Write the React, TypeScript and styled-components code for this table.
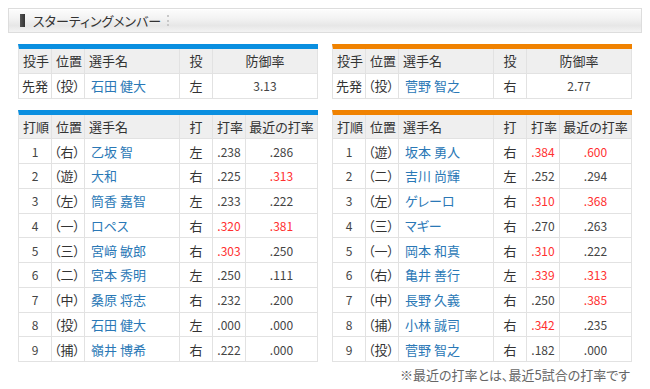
import React from "react";
import styled, { createGlobalStyle } from "styled-components";

const GlobalStyle = createGlobalStyle`
  html, body { margin: 0; padding: 0; background: #fff; }
  body {
    font-family: "Noto Sans CJK JP", "Noto Sans", sans-serif;
    font-feature-settings: "palt";
    color: #333;
  }
`;

const Page = styled.div`
  padding: 8px;
`;

const TitleBar = styled.div`
  box-sizing: border-box;
  height: 25px;
  display: flex;
  align-items: center;
  gap: 8px;
  padding-left: 11px;
  border: 1px solid #dddddd;
  background: linear-gradient(to bottom, #fdfdfd 0%, #f3f3f3 40%, #e7e7e7 72%, #f3f3f3 100%);
  box-shadow: inset 0 1px 0 #ffffff;
`;

const TitleMark = styled.span`
  width: 5px;
  height: 13px;
  background: linear-gradient(to right, #555, #333);
`;

const TitleText = styled.h2`
  margin: 0;
  font-size: 13px;
  font-weight: normal;
  line-height: 1;
  color: #333;
`;

const TitleDots = styled.span`
  margin-left: -2px;
  height: 11px;
  border-left: 2px dotted #c8c8c8;
`;

const Columns = styled.div`
  margin-top: 11px;
  padding: 0 10px;
  display: grid;
  grid-template-columns: 300px 300px;
  column-gap: 14px;
`;

const TeamColumn = styled.section`
  display: flex;
  flex-direction: column;
  gap: 11px;
`;

const StatTable = styled.table<{ $accent: string }>`
  width: 300px;
  table-layout: fixed;
  border-collapse: separate;
  border-spacing: 0;
  border-top: 5px solid ${(p) => p.$accent};
  border-left: 1px solid #e2e2e2;
`;

const HeadCell = styled.th<{ $align?: string }>`
  box-sizing: border-box;
  height: 24.75px;
  padding: 0 0 0 4px;
  font-size: 13px;
  font-weight: normal;
  color: #333;
  text-align: ${(p) => p.$align || "left"};
  background: #efefef;
  border-right: 1px solid #e2e2e2;
  border-bottom: 1px solid #e2e2e2;
  white-space: nowrap;
  overflow: hidden;
  ${(p) => (p.$align === "center" ? "padding: 0;" : "")}
`;

const Cell = styled.td<{ $align?: string; $pad?: number }>`
  box-sizing: border-box;
  height: 24.75px;
  padding: 0 0 0 ${(p) => (p.$pad ?? 4)}px;
  font-size: 13px;
  color: #333;
  text-align: ${(p) => p.$align || "left"};
  background: #fff;
  border-right: 1px solid #e2e2e2;
  border-bottom: 1px solid #e2e2e2;
  white-space: nowrap;
  overflow: hidden;
  ${(p) => (p.$align === "center" ? "padding: 0;" : "")}
`;

const NameLink = styled.a`
  color: #2a78b6;
  text-decoration: none;
`;

const Rate = styled.span<{ $hot?: boolean }>`
  font-size: 12px;
  color: ${(p) => (p.$hot ? "#ff3030" : "#444")};
`;

const Note = styled.p`
  margin: 5px 0 0;
  padding-right: 12px;
  text-align: right;
  font-size: 13px;
  line-height: 16px;
  color: #666;
`;

type Pitcher = { pos: string; name: string; hand: string; era: string };
type Batter = {
  order: number;
  pos: string;
  name: string;
  hand: string;
  avg: string;
  avgHot?: boolean;
  recent: string;
  recentHot?: boolean;
};

type Team = { accent: string; pitcher: Pitcher; lineup: Batter[] };

const teams: Team[] = [
  {
    accent: "#0a8fe0",
    pitcher: { pos: "（投）", name: "石田 健大", hand: "左", era: "3.13" },
    lineup: [
      { order: 1, pos: "（右）", name: "乙坂 智", hand: "左", avg: ".238", recent: ".286" },
      { order: 2, pos: "（遊）", name: "大和", hand: "右", avg: ".225", recent: ".313", recentHot: true },
      { order: 3, pos: "（左）", name: "筒香 嘉智", hand: "左", avg: ".233", recent: ".222" },
      { order: 4, pos: "（一）", name: "ロペス", hand: "右", avg: ".320", avgHot: true, recent: ".381", recentHot: true },
      { order: 5, pos: "（三）", name: "宮﨑 敏郎", hand: "右", avg: ".303", avgHot: true, recent: ".250" },
      { order: 6, pos: "（二）", name: "宮本 秀明", hand: "左", avg: ".250", recent: ".111" },
      { order: 7, pos: "（中）", name: "桑原 将志", hand: "右", avg: ".232", recent: ".200" },
      { order: 8, pos: "（投）", name: "石田 健大", hand: "左", avg: ".000", recent: ".000" },
      { order: 9, pos: "（捕）", name: "嶺井 博希", hand: "右", avg: ".222", recent: ".000" },
    ],
  },
  {
    accent: "#f08200",
    pitcher: { pos: "（投）", name: "菅野 智之", hand: "右", era: "2.77" },
    lineup: [
      { order: 1, pos: "（遊）", name: "坂本 勇人", hand: "右", avg: ".384", avgHot: true, recent: ".600", recentHot: true },
      { order: 2, pos: "（二）", name: "吉川 尚輝", hand: "左", avg: ".252", recent: ".294" },
      { order: 3, pos: "（左）", name: "ゲレーロ", hand: "右", avg: ".310", avgHot: true, recent: ".368", recentHot: true },
      { order: 4, pos: "（三）", name: "マギー", hand: "右", avg: ".270", recent: ".263" },
      { order: 5, pos: "（一）", name: "岡本 和真", hand: "右", avg: ".310", avgHot: true, recent: ".222" },
      { order: 6, pos: "（右）", name: "亀井 善行", hand: "左", avg: ".339", avgHot: true, recent: ".313", recentHot: true },
      { order: 7, pos: "（中）", name: "長野 久義", hand: "右", avg: ".250", recent: ".385", recentHot: true },
      { order: 8, pos: "（捕）", name: "小林 誠司", hand: "右", avg: ".342", avgHot: true, recent: ".235" },
      { order: 9, pos: "（投）", name: "菅野 智之", hand: "右", avg: ".182", recent: ".000" },
    ],
  },
];

const PitcherTable: React.FC<{ accent: string; p: Pitcher }> = ({ accent, p }) => (
  <StatTable $accent={accent}>
    <colgroup>
      <col style={{ width: 33 }} />
      <col style={{ width: 33 }} />
      <col style={{ width: 95 }} />
      <col style={{ width: 33 }} />
      <col />
    </colgroup>
    <thead>
      <tr>
        <HeadCell>投手</HeadCell>
        <HeadCell>位置</HeadCell>
        <HeadCell>選手名</HeadCell>
        <HeadCell $align="center">投</HeadCell>
        <HeadCell $align="center">防御率</HeadCell>
      </tr>
    </thead>
    <tbody>
      <tr>
        <Cell $pad={3}>先発</Cell>
        <Cell $pad={2}>{p.pos}</Cell>
        <Cell $pad={6}>
          <NameLink href="#">{p.name}</NameLink>
        </Cell>
        <Cell $align="center">{p.hand}</Cell>
        <Cell $align="center">
          <Rate>{p.era}</Rate>
        </Cell>
      </tr>
    </tbody>
  </StatTable>
);

const LineupTable: React.FC<{ accent: string; rows: Batter[] }> = ({ accent, rows }) => (
  <StatTable $accent={accent}>
    <colgroup>
      <col style={{ width: 33 }} />
      <col style={{ width: 33 }} />
      <col style={{ width: 95 }} />
      <col style={{ width: 33 }} />
      <col style={{ width: 33 }} />
      <col />
    </colgroup>
    <thead>
      <tr>
        <HeadCell>打順</HeadCell>
        <HeadCell>位置</HeadCell>
        <HeadCell>選手名</HeadCell>
        <HeadCell $align="center">打</HeadCell>
        <HeadCell>打率</HeadCell>
        <HeadCell $align="center">最近の打率</HeadCell>
      </tr>
    </thead>
    <tbody>
      {rows.map((b) => (
        <tr key={b.order}>
          <Cell $align="center">
            <Rate>{b.order}</Rate>
          </Cell>
          <Cell $pad={2}>{b.pos}</Cell>
          <Cell $pad={6}>
            <NameLink href="#">{b.name}</NameLink>
          </Cell>
          <Cell $align="center">{b.hand}</Cell>
          <Cell $align="center">
            <Rate $hot={b.avgHot}>{b.avg}</Rate>
          </Cell>
          <Cell $align="center">
            <Rate $hot={b.recentHot}>{b.recent}</Rate>
          </Cell>
        </tr>
      ))}
    </tbody>
  </StatTable>
);

export default function App() {
  return (
    <Page>
      <GlobalStyle />
      <TitleBar>
        <TitleMark />
        <TitleText>スターティングメンバー</TitleText>
        <TitleDots />
      </TitleBar>
      <Columns>
        {teams.map((t, i) => (
          <TeamColumn key={i}>
            <PitcherTable accent={t.accent} p={t.pitcher} />
            <LineupTable accent={t.accent} rows={t.lineup} />
          </TeamColumn>
        ))}
      </Columns>
      <Note>※最近の打率とは、最近5試合の打率です</Note>
    </Page>
  );
}
